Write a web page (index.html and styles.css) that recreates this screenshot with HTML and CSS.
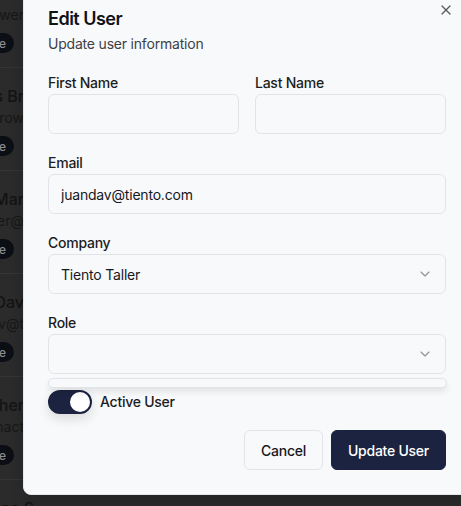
FILE: index.html
```html
<!DOCTYPE html>
<html lang="en">
<head>
<meta charset="utf-8">
<title>Edit User</title>
<link rel="stylesheet" href="styles.css">
</head>
<body>
<div class="page">
  <div class="bg-list">
    <div class="bg-row">
      <div class="bg-line bg-name">Juan Powers</div>
      <div class="bg-line bg-email">juan.power</div>
      <div class="bg-line bg-badge-line"><span class="bg-badge">Active</span></div>
    </div>
    <div class="bg-row">
      <div class="bg-line bg-name">Lucas Br</div>
      <div class="bg-line bg-email">lucas.brow</div>
      <div class="bg-line bg-badge-line"><span class="bg-badge">Active</span></div>
    </div>
    <div class="bg-row">
      <div class="bg-line bg-name">Ana Mar</div>
      <div class="bg-line bg-email">ana.miller@</div>
      <div class="bg-line bg-badge-line"><span class="bg-badge">Active</span></div>
    </div>
    <div class="bg-row">
      <div class="bg-line bg-name">Juan Dav</div>
      <div class="bg-line bg-email">juandav@t</div>
      <div class="bg-line bg-badge-line"><span class="bg-badge">Active</span></div>
    </div>
    <div class="bg-row">
      <div class="bg-line bg-name">Esther</div>
      <div class="bg-line bg-email">inact</div>
      <div class="bg-line bg-badge-line"><span class="bg-badge">Inactive</span></div>
    </div>
    <div class="bg-row">
      <div class="bg-line bg-name bg-spill">Ana S</div>
    </div>
  </div>

  <div class="dialog" role="dialog">
    <button class="close" aria-label="Close">
      <svg viewBox="0 0 24 24" width="16" height="16" fill="none" stroke="currentColor" stroke-width="2" stroke-linecap="round" stroke-linejoin="round"><path d="M18 6 6 18"/><path d="m6 6 12 12"/></svg>
    </button>
    <div class="header">
      <h2 class="title">Edit User</h2>
      <p class="subtitle">Update user information</p>
    </div>
    <form class="form">
      <div class="row-2">
        <div class="field">
          <label class="label">First Name</label>
          <input class="input" type="text">
        </div>
        <div class="field">
          <label class="label">Last Name</label>
          <input class="input" type="text">
        </div>
      </div>
      <div class="field">
        <label class="label">Email</label>
        <input class="input" type="text" value="juandav@tiento.com">
      </div>
      <div class="field">
        <label class="label">Company</label>
        <div class="select">
          <span class="select-value">Tiento Taller</span>
          <svg class="chev" viewBox="0 0 24 24" width="16" height="16" fill="none" stroke="currentColor" stroke-width="1.6" stroke-linecap="round" stroke-linejoin="round"><path d="m6 9 6 6 6-6"/></svg>
        </div>
      </div>
      <div class="field field-role">
        <label class="label">Role</label>
        <div class="select">
          <span class="select-value"></span>
          <svg class="chev" viewBox="0 0 24 24" width="16" height="16" fill="none" stroke="currentColor" stroke-width="1.6" stroke-linecap="round" stroke-linejoin="round"><path d="m6 9 6 6 6-6"/></svg>
        </div>
        <div class="popover"></div>
      </div>
      <div class="switch-row">
        <span class="switch"><span class="thumb"></span></span>
        <span class="switch-label">Active User</span>
      </div>
      <div class="actions">
        <button type="button" class="btn btn-outline">Cancel</button>
        <button type="button" class="btn btn-primary">Update User</button>
      </div>
    </form>
  </div>
</div>
</body>
</html>
```

FILE: styles.css
```css
* { box-sizing: border-box; }

html, body {
  margin: 0;
  padding: 0;
}

body {
  width: 461px;
  height: 506px;
  overflow: hidden;
  background: #2c2c2c;
  font-family: Inter, "Noto Sans", sans-serif;
}

.page {
  position: relative;
  width: 461px;
  height: 506px;
  overflow: hidden;
}

/* background list behind overlay */
.bg-list {
  margin-top: -35px;
}

.bg-row {
  padding: 16px 0 14px;
  border-bottom: 1px solid #373737;
  height: 103px;
}

.bg-line {
  display: flex;
  justify-content: flex-end;
  width: 24px;
  white-space: nowrap;
}

.bg-name {
  font-size: 16px;
  line-height: 24px;
  font-weight: 500;
  color: #141414;
}

.bg-spill {
  width: 34px;
}

.bg-email {
  font-size: 14px;
  line-height: 20px;
  color: #171717;
}

.bg-badge-line {
  margin-top: 8px;
  width: 14px;
}

.bg-badge {
  flex: none;
  display: inline-flex;
  align-items: center;
  height: 20px;
  padding: 0 8px 0 10px;
  border-radius: 10px;
  background: #0d0f17;
  color: #8d8d8d;
  font-size: 12px;
  font-weight: 500;
}

/* dialog */
.dialog {
  position: absolute;
  left: 23px;
  top: -15px;
  width: 448px;
  padding: 24px;
  background: #f8f9fb;
  border: 1px solid #e7e8ec;
  border-radius: 8px;
  box-shadow: 0 10px 25px rgba(0, 0, 0, 0.2);
  letter-spacing: -0.25px;
}

.close {
  position: absolute;
  top: 16px;
  right: 16px;
  width: 16px;
  height: 16px;
  padding: 0;
  border: 0;
  background: none;
  color: #5a5c62;
  display: flex;
}

.header {
  display: flex;
  flex-direction: column;
  gap: 6px;
}

.title {
  margin: 0;
  font-size: 18px;
  line-height: 18px;
  font-weight: 600;
  color: #111216;
  letter-spacing: -0.5px;
}

.subtitle {
  margin: 0;
  font-size: 14px;
  line-height: 20px;
  color: #3e4046;
  letter-spacing: -0.2px;
}

.form {
  margin-top: 19px;
  display: flex;
  flex-direction: column;
  gap: 19px;
}

.row-2 {
  display: grid;
  grid-template-columns: 1fr 1fr;
  gap: 16px;
}

.field {
  display: flex;
  flex-direction: column;
  gap: 1px;
}

.field-role {
  position: relative;
}

.label {
  font-size: 14px;
  line-height: 20px;
  font-weight: 500;
  color: #1c1d22;
}

.input,
.select {
  height: 40px;
  width: 100%;
  border: 1px solid #e2e4e9;
  border-radius: 6px;
  background: #f8f9fb;
  padding: 0 12px;
  font-family: Inter, "Noto Sans", sans-serif;
  font-size: 14px;
  letter-spacing: -0.2px;
  color: #17181c;
}

.input {
  outline: none;
}

.select {
  display: flex;
  align-items: center;
  justify-content: space-between;
}

.chev {
  color: #8e9096;
}

.popover {
  position: absolute;
  left: 0;
  right: -1px;
  top: calc(100% + 4px);
  height: 10px;
  border: 1px solid #e2e4e9;
  border-radius: 6px;
  background: #f8f9fb;
  box-shadow: 0 4px 6px rgba(0, 0, 0, 0.09);
}

.switch-row {
  margin-top: -3px;
  display: flex;
  align-items: center;
  gap: 8px;
}

.switch {
  width: 44px;
  height: 24px;
  border-radius: 12px;
  border: 2px solid #1c2340;
  background: #1c2340;
  display: flex;
  justify-content: flex-end;
  box-shadow: 0 5px 12px rgba(0, 0, 0, 0.12);
}

.thumb {
  width: 20px;
  height: 20px;
  border-radius: 50%;
  background: #ffffff;
}

.switch-label {
  font-size: 14px;
  line-height: 20px;
  font-weight: 500;
  color: #1c1d22;
}

.actions {
  margin-top: -3px;
  display: flex;
  justify-content: flex-end;
  gap: 8px;
}

.btn {
  height: 40px;
  padding: 0 16px;
  border-radius: 6px;
  font-family: Inter, "Noto Sans", sans-serif;
  font-size: 14px;
  font-weight: 500;
  letter-spacing: -0.25px;
  cursor: pointer;
}

.btn-outline {
  border: 1px solid #e2e4e9;
  background: #f8f9fb;
  color: #17181c;
}

.btn-primary {
  border: 1px solid #1c2340;
  background: #1c2340;
  color: #ffffff;
}
```
